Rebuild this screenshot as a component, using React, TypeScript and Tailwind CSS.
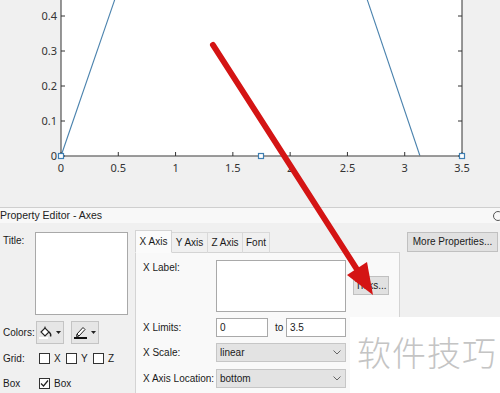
import React from "react";

function Chart() {
  const x0 = 61;
  const x1 = 462;
  const yb = 156;
  const xs = [0, 0.5, 1, 1.5, 2, 2.5, 3, 3.5];
  const xl = ["0", "0.5", "1", "1.5", "2", "2.5", "3", "3.5"];
  const yt = [
    { y: 16, l: "0.4" },
    { y: 51, l: "0.3" },
    { y: 86, l: "0.2" },
    { y: 121, l: "0.1" },
    { y: 156, l: "0" },
  ];
  const px = (v: number) => x0 + (v / 3.5) * (x1 - x0);
  return (
    <svg width="500" height="207" className="block">
      <rect x="0" y="0" width="500" height="207" fill="#f0f0f0" />
      <rect x={x0} y="0" width={x1 - x0} height={yb} fill="#ffffff" />
      <polyline points="61,156 116,-4" fill="none" stroke="#4a82ad" strokeWidth="1.1" />
      <polyline points="366,-4 420,156" fill="none" stroke="#4a82ad" strokeWidth="1.1" />
      <line x1={x0} y1="0" x2={x0} y2={yb} stroke="#333" strokeWidth="1" />
      <line x1={x1} y1="0" x2={x1} y2={yb} stroke="#333" strokeWidth="1" />
      <line x1={x0} y1={yb} x2={x1} y2={yb} stroke="#7a7a7a" strokeWidth="1.6" />
      {yt.map((t) => (
        <g key={t.l}>
          <line x1={x0} y1={t.y} x2={x0 + 4} y2={t.y} stroke="#333" />
          <line x1={x1 - 4} y1={t.y} x2={x1} y2={t.y} stroke="#333" />
          <text x="57" y={t.y + 4} textAnchor="end" fontSize="11" fill="#333" fontFamily="Noto Sans, sans-serif">
            {t.l}
          </text>
        </g>
      ))}
      {xs.map((v, i) => (
        <g key={i}>
          <line x1={px(v)} y1={yb} x2={px(v)} y2={yb - 4} stroke="#333" />
          <text x={px(v)} y="172" textAnchor="middle" fontSize="11" fill="#333" fontFamily="Noto Sans, sans-serif">
            {xl[i]}
          </text>
        </g>
      ))}
      {[61, 261, 462].map((x) => (
        <rect key={x} x={x - 2.5} y={yb - 2.5} width="5" height="5" fill="#fff" stroke="#3f7fb2" strokeWidth="1.2" />
      ))}
    </svg>
  );
}

function Check({ checked }: { checked?: boolean }) {
  return (
    <div className="w-[11px] h-[11px] border border-[#333] bg-white flex items-center justify-center">
      {checked && (
        <svg width="9" height="9" viewBox="0 0 9 9">
          <polyline points="1,4.5 3.5,7 8,1.5" fill="none" stroke="#222" strokeWidth="1.2" />
        </svg>
      )}
    </div>
  );
}

function Chevron() {
  return (
    <svg width="8" height="5" viewBox="0 0 8 5" className="mr-[4px]">
      <polyline points="0.5,0.5 4,4 7.5,0.5" fill="none" stroke="#666" strokeWidth="1" />
    </svg>
  );
}

function Caret() {
  return (
    <svg width="5" height="3" viewBox="0 0 5 3">
      <polygon points="0,0 5,0 2.5,3" fill="#222" />
    </svg>
  );
}

export default function App() {
  return (
    <div className="w-[500px] h-[393px] relative overflow-hidden bg-[#f0f0f0] font-['Liberation_Sans',Arial,sans-serif] text-[10px] text-[#1a1a1a] leading-none">
      <Chart />
      {/* Title bar */}
      <div className="h-[16px] border-t border-[#cfcfcf] bg-[#f8f8f8] flex items-center justify-between">
        <span className="text-[10.5px] text-[#222]">Property Editor - Axes</span>
        <div className="w-[10px] h-[10px] rounded-full border border-[#555] -mr-[3px]" />
      </div>
      {/* Content */}
      <div className="flex">
        {/* left column */}
        <div className="w-[135px] flex flex-col">
          <div className="flex mt-[9px]">
            <div className="w-[35px] pl-[3px] pt-[4px]">Title:</div>
            <div className="w-[93px] h-[83px] bg-white border border-[#a9a9a9]" />
          </div>
          <div className="flex items-center mt-[6px] h-[23px]">
            <div className="w-[36px] pl-[3px]">Colors:</div>
            <div className="w-[28px] h-[23px] bg-[#e6e6e6] border border-[#c4c4c4] flex items-center justify-center gap-[3px]">
              <svg width="14" height="13" viewBox="0 0 14 13">
                <path d="M2 6 L6 2 L10 6 L6 10 Z" fill="#fff" stroke="#222" strokeWidth="1.1" />
                <path d="M6 2 L6 0.5" stroke="#222" />
                <path d="M10 6 Q12.5 8 11.5 10.5" fill="none" stroke="#222" strokeWidth="1.4" />
                <rect x="0" y="11" width="9" height="2" fill="#fff" />
              </svg>
              <Caret />
            </div>
            <div className="w-[28px] h-[23px] ml-[7px] bg-[#e6e6e6] border border-[#c4c4c4] flex items-center justify-center gap-[3px]">
              <svg width="14" height="13" viewBox="0 0 14 13">
                <path d="M3 8 L9 1.5 L11 3.5 L5 10 Z" fill="#fff" stroke="#222" strokeWidth="1" />
                <path d="M3 8 L2.5 10.5 L5 10" fill="none" stroke="#222" />
                <rect x="0" y="11" width="13" height="2" fill="#111" />
              </svg>
              <Caret />
            </div>
          </div>
          <div className="flex items-center mt-[2px] h-[25px]">
            <div className="w-[39px] pl-[3px]">Grid:</div>
            <Check />
            <span className="ml-[4px] w-[12px]">X</span>
            <Check />
            <span className="ml-[4px] w-[12px]">Y</span>
            <Check />
            <span className="ml-[4px]">Z</span>
          </div>
          <div className="flex items-center h-[25px]">
            <div className="w-[39px] pl-[3px]">Box</div>
            <Check checked />
            <span className="ml-[4px]">Box</span>
          </div>
        </div>
        {/* tabs */}
        <div className="w-[265px] mt-[7px] flex flex-col">
          <div className="flex h-[23px] items-end relative z-10">
            <div className="w-[37px] h-[23px] bg-[#fbfbfb] border border-[#d4d4d4] border-b-[#fbfbfb] flex items-center justify-center">X Axis</div>
            <div className="w-[36px] h-[21px] border border-[#d9d9d9] border-l-0 border-b-0 flex items-center justify-center">Y Axis</div>
            <div className="w-[35px] h-[21px] border border-[#d9d9d9] border-l-0 border-b-0 flex items-center justify-center">Z Axis</div>
            <div className="w-[27px] h-[21px] border border-[#d9d9d9] border-l-0 border-b-0 flex items-center justify-center">Font</div>
          </div>
          <div className="-mt-[1px] h-[160px] border border-[#d4d4d4] bg-[#f9f9f9] pl-[7px] flex flex-col">
            <div className="flex mt-[7px]">
              <div className="w-[73px] pt-[3px]">X Label:</div>
              <div className="w-[130px] h-[52px] bg-white border border-[#a9a9a9]" />
              <div className="ml-[7px] mt-[16px] w-[36px] h-[19px] bg-[#e1e1e1] border border-[#c0c0c0] flex items-center justify-center">
                Ticks...
              </div>
            </div>
            <div className="flex items-center mt-[6px] h-[19px]">
              <div className="w-[73px]">X Limits:</div>
              <div className="w-[52px] h-[19px] bg-white border border-[#a9a9a9] flex items-center pl-[3px]">0</div>
              <div className="w-[18px] pl-[7px]">to</div>
              <div className="w-[60px] h-[19px] bg-white border border-[#a9a9a9] flex items-center pl-[3px]">3.5</div>
              <div className="ml-[4px] w-[1px] h-[13px] bg-[#666]" />
            </div>
            <div className="flex items-center mt-[6px] h-[19px]">
              <div className="w-[73px]">X Scale:</div>
              <div className="w-[130px] h-[19px] bg-[#e3e3e3] border border-[#c6c6c6] flex items-center justify-between pl-[3px]">
                <span>linear</span>
                <Chevron />
              </div>
              <div className="ml-[4px] w-[1px] h-[13px] bg-[#666]" />
            </div>
            <div className="flex items-center mt-[7px] h-[19px]">
              <div className="w-[73px] whitespace-nowrap">X Axis Location:</div>
              <div className="w-[130px] h-[19px] bg-[#e3e3e3] border border-[#c6c6c6] flex items-center justify-between pl-[3px]">
                <span>bottom</span>
                <Chevron />
              </div>
            </div>
          </div>
        </div>
        {/* right */}
        <div className="ml-[7px] mt-[9px]">
          <div className="w-[91px] h-[20px] bg-[#e1e1e1] border border-[#c0c0c0] flex items-center justify-center whitespace-nowrap">
            More Properties...
          </div>
        </div>
      </div>
      {/* watermark overlay */}
      <div className="absolute left-[350px] top-[317px] w-[150px] h-[76px] bg-white flex items-center pl-[7px]">
        <span className="text-[34px] text-[#c4c4c4] font-['Noto_Sans_CJK_SC',sans-serif] font-light tracking-[1px] leading-none -mt-[6px]">
          软件技巧
        </span>
      </div>
      {/* red arrow overlay */}
      <svg className="absolute left-0 top-0 pointer-events-none" width="500" height="393">
        <line x1="213" y1="45" x2="358" y2="271" stroke="#d41414" strokeWidth="6" strokeLinecap="round" />
        <polygon points="373,295 347,275 367,262" fill="#d41414" />
      </svg>
    </div>
  );
}
